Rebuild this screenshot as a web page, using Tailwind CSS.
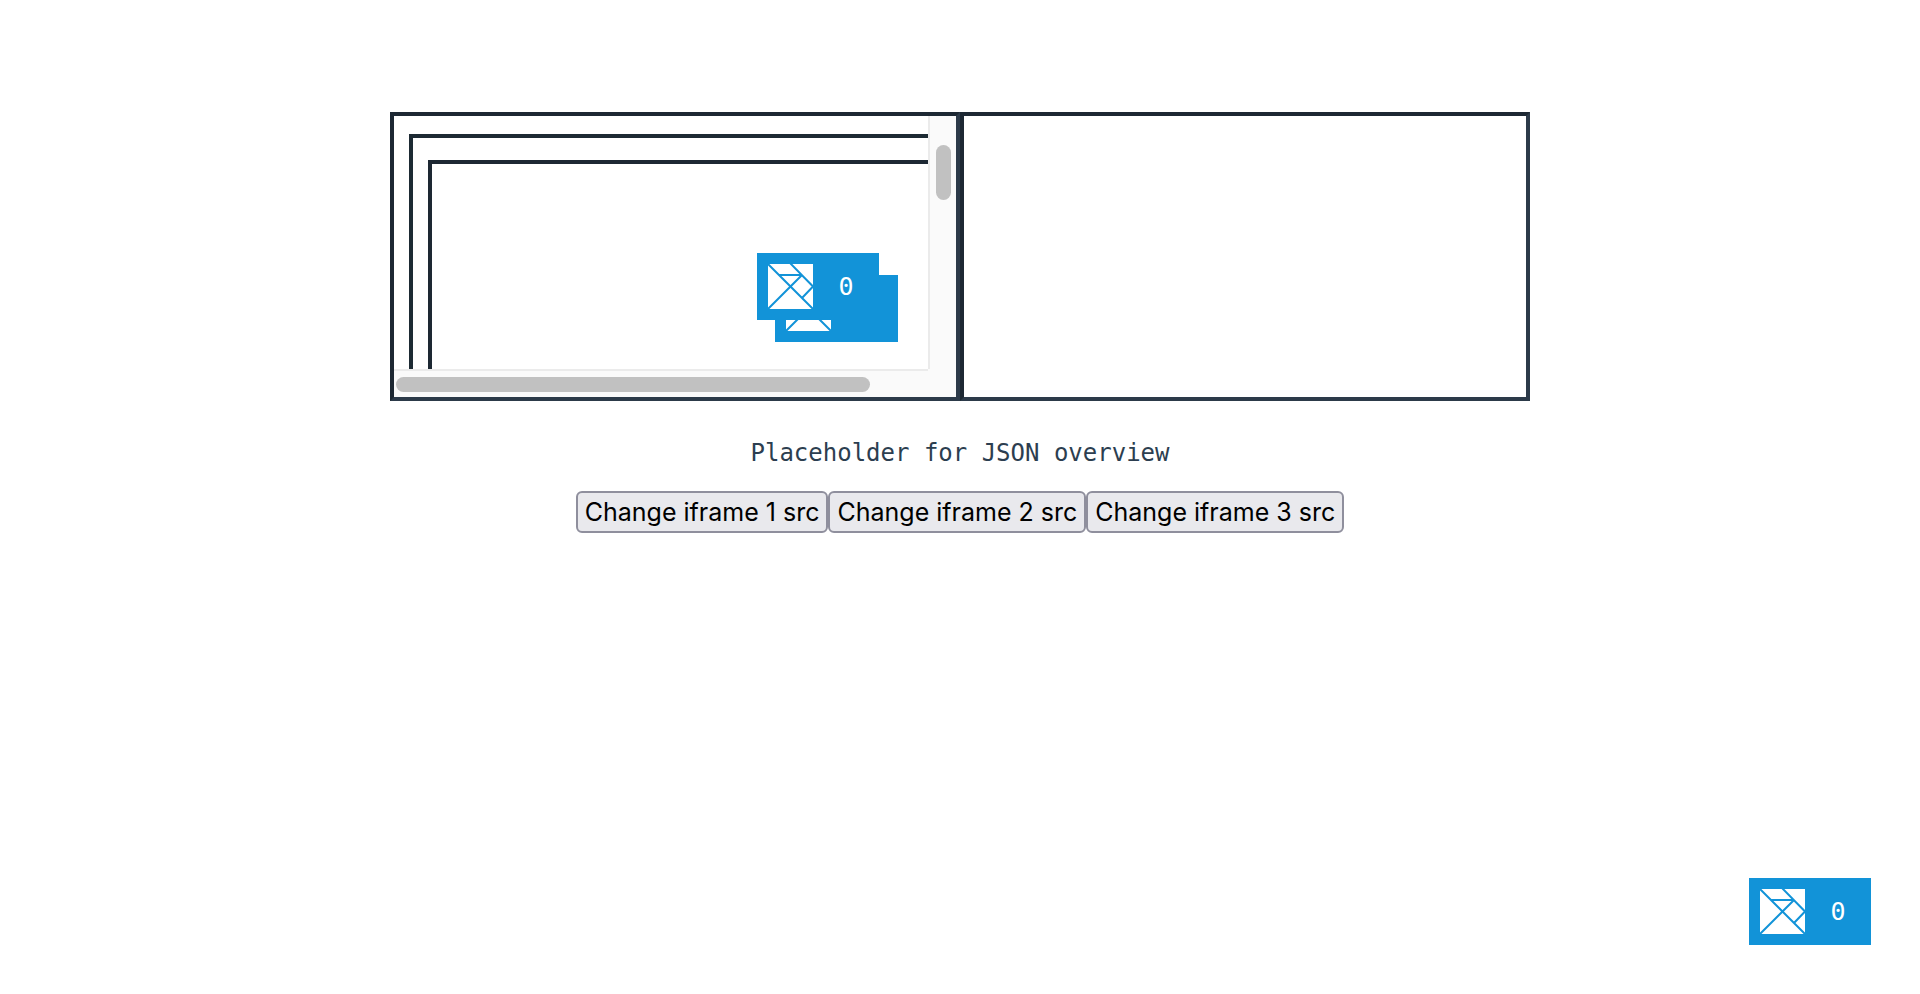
<!DOCTYPE html>
<html lang="en">
<head>
<meta charset="utf-8">
<meta name="viewport" content="width=device-width, initial-scale=1">
<title>Iframe overview</title>
<script src="https://cdn.jsdelivr.net/npm/@tailwindcss/browser@4"></script>
</head>
<body class="min-h-screen bg-white font-['Inter',sans-serif] text-[#2c3e50]">
<svg class="hidden" aria-hidden="true">
  <symbol id="tangram" viewBox="0 0 45 45">
    <rect width="45" height="45" fill="#fff"/>
    <path d="M0 0L45 45M0 45L34 11M22 -1L45 22.5L34 34M11 11H34" fill="none" stroke="#1293d8" stroke-width="2"/>
  </symbol>
</svg>
<main class="flex flex-col items-center px-4 pt-28">
  <section class="grid w-full max-w-[1140px] grid-cols-2" aria-label="Previews">
    <div class="grid h-[289px] grid-cols-[1fr_28px] grid-rows-[1fr_28px] border-4 border-t-[#1d2833] border-l-[#1d2833] border-r-[#2c3a49] border-b-[#2c3a49]">
      <div class="relative flex overflow-hidden pt-[18px] pl-[15px]">
        <div class="flex flex-1 border-t-4 border-l-4 border-[#1d2a33] pt-[22px] pl-[15px]">
          <div class="flex-1 border-t-4 border-l-4 border-[#1d2833]"></div>
        </div>
        <div class="absolute right-[30px] bottom-[27px] h-[67px] w-[123px] bg-[#1293d8] p-[11px]">
          <svg class="size-[45px]" aria-hidden="true"><use href="#tangram"/></svg>
        </div>
        <div class="absolute right-[49px] bottom-[49px] flex h-[67px] w-[122px] items-center bg-[#1293d8] pl-[11px] text-white">
          <svg class="size-[45px]" aria-hidden="true"><use href="#tangram"/></svg>
          <span class="flex-1 text-center font-['DejaVu_Sans_Mono',monospace] text-[25px]">0</span>
        </div>
      </div>
      <div class="border-l-2 border-[#ebebeb] bg-[#fafafa] pt-[29px] pl-[6px]">
        <div class="h-[55px] w-[15px] rounded-full bg-[#c1c1c1]"></div>
      </div>
      <div class="border-t-2 border-[#ebebeb] bg-[#fafafa] pt-[6px] pl-[2px]">
        <div class="h-[15px] w-[474px] rounded-full bg-[#c1c1c1]"></div>
      </div>
      <div class="bg-[#fafafa]"></div>
    </div>
    <div class="h-[289px] border-4 border-t-[#1d2833] border-l-[#1d2833] border-r-[#2c3a49] border-b-[#2c3a49]"></div>
  </section>
  <p class="mt-9 font-['DejaVu_Sans_Mono',monospace] text-2xl">Placeholder for JSON overview</p>
  <div class="mt-[22px] flex">
    <button type="button" class="h-[42px] rounded-md border-2 border-[#8f8f9d] bg-[#e9e9ed] px-[7px] text-[25px] leading-[38px] text-black">Change iframe 1 src</button>
    <button type="button" class="h-[42px] rounded-md border-2 border-[#8f8f9d] bg-[#e9e9ed] px-[7px] text-[25px] leading-[38px] text-black">Change iframe 2 src</button>
    <button type="button" class="h-[42px] rounded-md border-2 border-[#8f8f9d] bg-[#e9e9ed] px-[7px] text-[25px] leading-[38px] text-black">Change iframe 3 src</button>
  </div>
</main>
<aside class="fixed right-[49px] bottom-[49px] flex h-[67px] w-[122px] items-center bg-[#1293d8] pl-[11px] text-white">
  <svg class="size-[45px]" aria-hidden="true"><use href="#tangram"/></svg>
  <span class="flex-1 text-center font-['DejaVu_Sans_Mono',monospace] text-[25px]">0</span>
</aside>
</body>
</html>
